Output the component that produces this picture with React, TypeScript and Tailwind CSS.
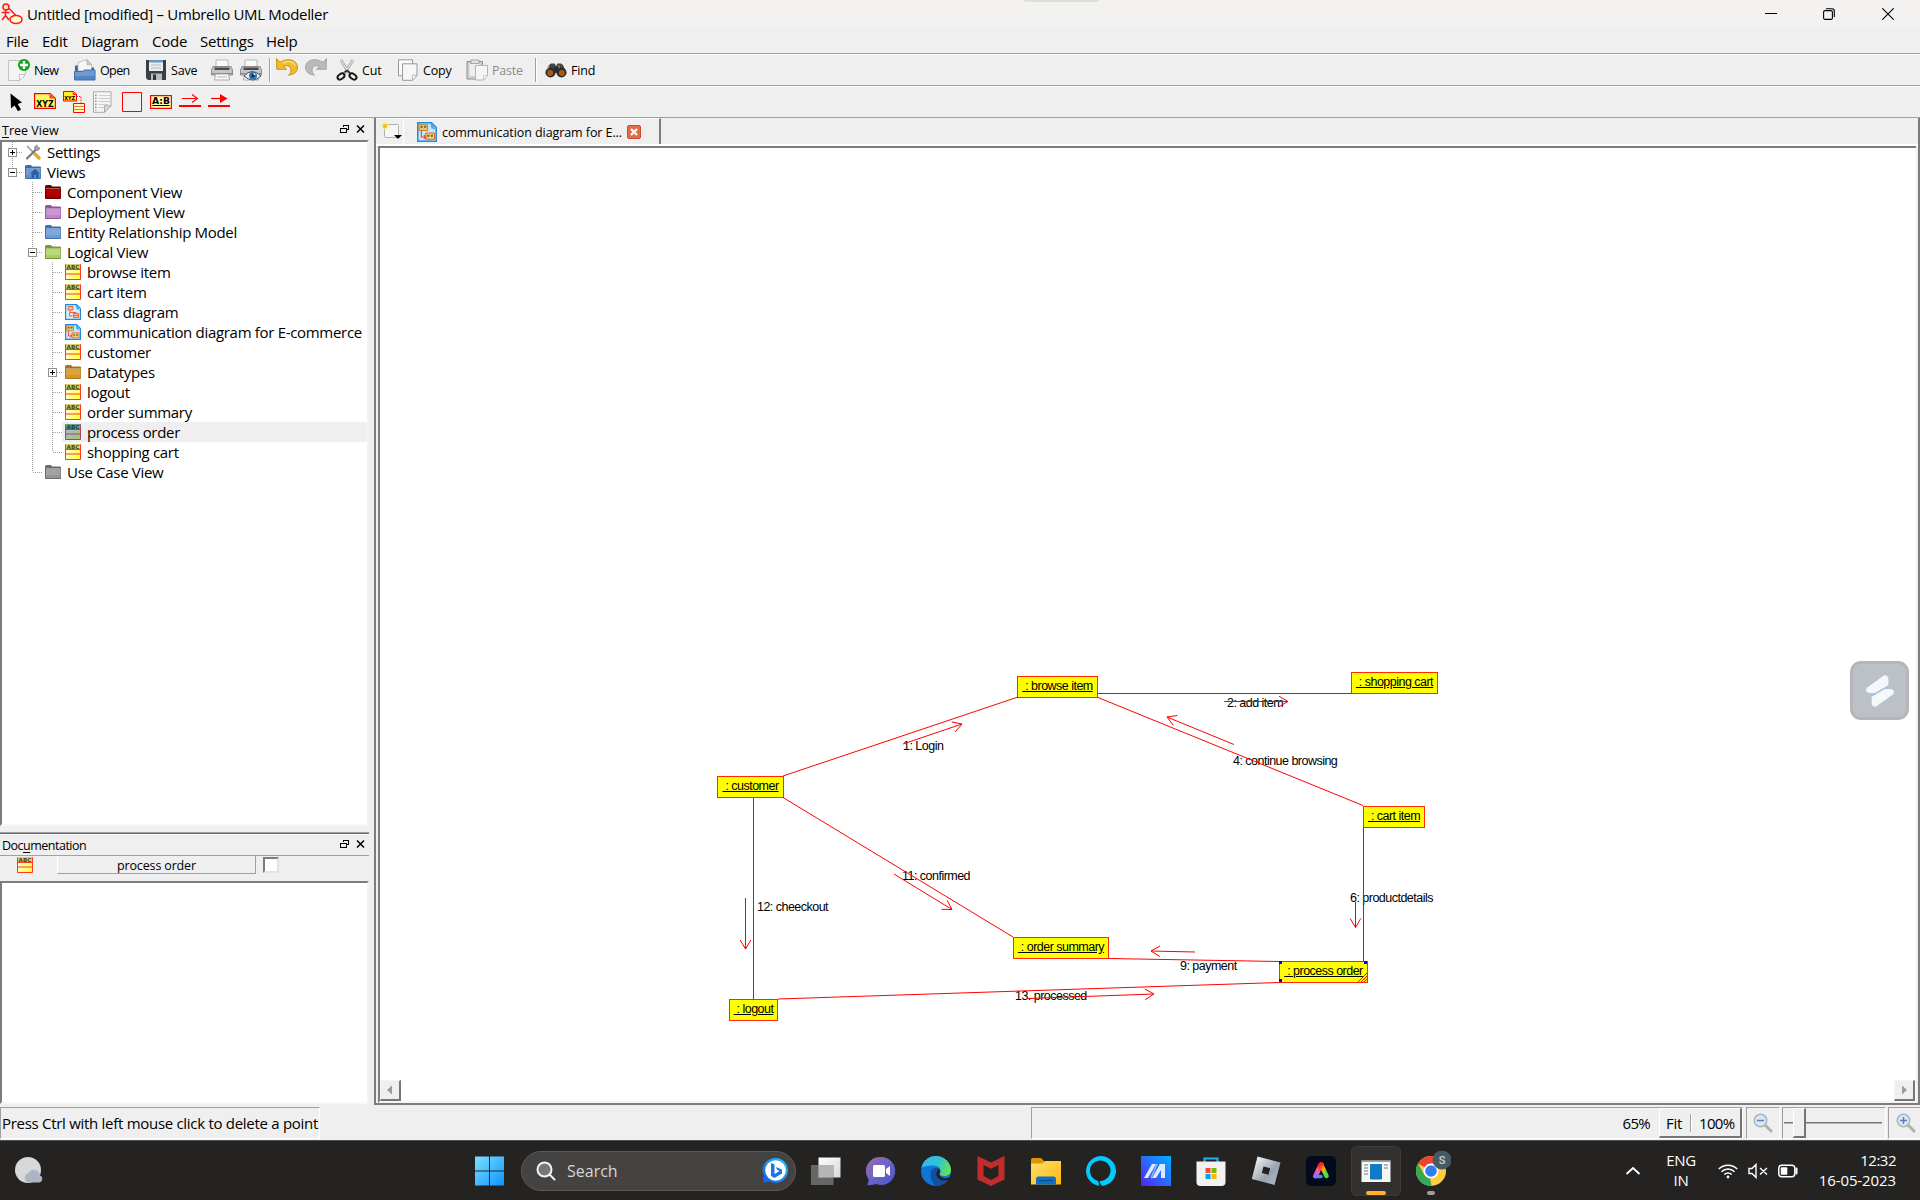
import React from 'react';

const UI = 'font-["Open_Sans",sans-serif] text-[15px] leading-[20px]';
const SMALL = 'font-["Open_Sans",sans-serif] text-[12.5px] leading-[16px]';

/* ---------- toolbar icons ---------- */

const I22 = ({ children, className = '' }: { children: React.ReactNode; className?: string }) => (
  <svg viewBox="0 0 22 22" className={'h-[22px] w-[22px] shrink-0 ' + className} fill="none">{children}</svg>
);

const NewIcon = () => (
  <I22>
    <path d="M.5 1.5h17v14l-6 6H.5z" fill="#f4f5f3" stroke="#c2c2c2" />
    <path d="M11.5 21.5v-6h6z" fill="#fff" stroke="#b5b5b5" strokeWidth=".8" />
    <circle cx="16" cy="6" r="6" fill="#11a51c" />
    <path d="M16 2v8M12 6h8" stroke="#fff" strokeWidth="2.4" />
  </I22>
);
const OpenIcon = () => (
  <I22>
    <path d="M1 6.500h5l1 2h13v8H1z" fill="#3f6795" />
    <path d="M4 12V3.500l9-3 4.500 5V12z" fill="#f7f7f7" stroke="#aaa" strokeWidth=".7" />
    <path d="M12.500.7l.8 5.300 4.200-.5z" fill="#d0d0d0" stroke="#999" strokeWidth=".5" />
    <path d="M.5 12.500h8l2-1.500h10.500v10H.5z" fill="#6d9bd0" stroke="#3f70a8" />
    <path d="M1 17h20v4H1z" fill="#3f72ae" opacity=".55" />
  </I22>
);
const SaveIcon = () => (
  <I22>
    <path d="M1 1h20v20H3l-2-2z" fill="#3c3f42" />
    <path d="M4 1h14v11H4z" fill="#e9edf1" />
    <path d="M4 1h14v2.500H4z" fill="#6b98c8" />
    <path d="M6 6h10M6 9h10" stroke="#b8bcc0" />
    <path d="M6 14.500h11V21H6z" fill="#b9bcbe" />
    <path d="M8 15.500h3V21H8z" fill="#303234" />
  </I22>
);
const PrintBody = () => (
  <>
    <path d="M5 1h12v8H5z" fill="#fafafa" stroke="#aaa" strokeWidth=".8" />
    <path d="M2 7.500h18l1.500 3.500v5H.5v-5z" fill="#c6c6c6" stroke="#777" strokeWidth=".8" />
    <path d="M3.500 8.500h15V11h-15z" fill="#4a4a4a" />
    <path d="M1 14.500h20" stroke="#8a8a8a" />
    <path d="M4.500 15h13l1 6h-15z" fill="#f8f8f8" stroke="#999" strokeWidth=".8" />
  </>
);
const PrintIcon = () => <I22><PrintBody /><path d="M6 18h10" stroke="#bbb" /></I22>;
const PreviewIcon = () => (
  <I22>
    <PrintBody />
    <path d="M4 17q8-9 17 0-8 8-17 0z" fill="#e9eef3" stroke="#47525c" />
    <circle cx="13" cy="16.800" r="4" fill="#2f78b5" />
    <circle cx="13" cy="16.800" r="1.700" fill="#142f49" />
    <circle cx="14.500" cy="15.200" r=".9" fill="#fff" />
  </I22>
);
const Curl = ({ fill, stroke }: { fill: string; stroke: string }) => (
  <path d="M.5.5l.3 10.800h9.700L7.500 8q7.500-1.600 7.500 4.500 0 2.700-2.500 4.800 9.500-1.500 9-8.500C20.800 1.500 11.500-.5 4 4.200z" fill={fill} stroke={stroke} strokeWidth=".9" />
);
const UndoIcon = () => <I22 className="-mt-[2px]"><Curl fill="#eebd2c" stroke="#c48d0b" /><path d="M7 5q9-3.500 12 2.500" stroke="#fbe28c" strokeWidth="1.300" /></I22>;
const RedoIcon = () => <I22 className="-mt-[2px]"><g transform="translate(22 0) scale(-1 1)"><Curl fill="#b9b9b9" stroke="#a2a2a2" /></g></I22>;
const CutIcon = () => (
  <I22>
    <path d="M5 1l8.500 14" stroke="#999" strokeWidth="2.600" /><path d="M17 1L8 15" stroke="#999" strokeWidth="2.600" />
    <path d="M5 1l8.500 14M17 1L8 15" stroke="#f2f2f2" strokeWidth="1.100" />
    <path d="M8.500 13.500l2.500-2 3 2.500" stroke="#222" strokeWidth="1.600" />
    <ellipse cx="5" cy="17.500" rx="3.800" ry="2.500" transform="rotate(-35 5 17.500)" stroke="#161616" strokeWidth="2" />
    <ellipse cx="17" cy="17.500" rx="3.800" ry="2.500" transform="rotate(35 17 17.500)" stroke="#161616" strokeWidth="2" />
  </I22>
);
const CopyIcon = () => (
  <I22>
    <path d="M1.500.8h14v16h-14z" fill="#fafafa" stroke="#999" />
    <path d="M5.500 4.800h14.500v11.500l-4.500 5h-10z" fill="#f6f6f6" stroke="#999" />
    <path d="M15.500 21.300v-5H20z" fill="#fff" stroke="#aaa" strokeWidth=".8" />
  </I22>
);
const PasteIcon = () => (
  <I22>
    <path d="M1 2.500h15.500v17.500H1z" fill="#cfcfcf" stroke="#8d8d8d" />
    <path d="M3.500 5h10v12h-10z" fill="#eee" />
    <path d="M5 1h8v3.500H5z" fill="#e3e3e3" stroke="#999" strokeWidth=".8" />
    <path d="M9.500 6.500h12v10l-4 4.500h-8z" fill="#f6f6f6" stroke="#b3b3b3" />
    <path d="M17.500 21v-4.500h4z" fill="#fff" stroke="#bbb" strokeWidth=".8" />
  </I22>
);
const FindIcon = () => (
  <I22>
    <path d="M4 6l2-1.500h3.500L11 7l1.500-2.500H16L18 6l3.500 8H.5z" fill="#434343" />
    <path d="M9 8h4v5H9z" fill="#2b2b2b" />
    <circle cx="5.500" cy="13.500" r="5" fill="#2c2c2c" /><circle cx="16.500" cy="13.500" r="5" fill="#2c2c2c" />
    <circle cx="5.200" cy="14" r="3" fill="#a85a1b" /><circle cx="16.800" cy="14" r="3" fill="#a85a1b" />
    <path d="M4.500 6.500l-2 4M13.500 6l1 3" stroke="#8a8a8a" strokeWidth="1.200" />
  </I22>
);

/* ---------- UML tool icons ---------- */

const Bold = ({ x, y, size, len, children }: { x: number; y: number; size: number; len: number; children: string }) => (
  <text x={x} y={y} fontSize={size} textLength={len} lengthAdjust="spacingAndGlyphs" fontWeight="700" fontFamily="DejaVu Sans, sans-serif" fill="#000">{children}</text>
);
const tools: React.ReactNode[] = [
  <path d="M5.500 2.500l.5 15 3.500-3 3.500 5.800 3-1.800-3.300-5.500 4.300-1.500z" fill="#000" />,
  <><path d="M.6 2.600h15.600l5.200 4.800v10H.6z" fill="#fffa66" stroke="red" strokeWidth="1.200" /><path d="M14.500 3l1.500 4.500h5z" fill="#ff3b1f" /><Bold x={2.200} y={15.800} size={8.500} len={17.500}>XYZ</Bold></>,
  <><path d="M.5.5h10l3 2.500v7H.5z" fill="#ffee22" stroke="red" /><path d="M9 1l1.500 3h3z" fill="red" /><Bold x={1.200} y={8.500} size={5.500} len={11}>XYZ</Bold><path d="M13.500 5.500h4.500V12" stroke="red" strokeDasharray="1.300 1.300" /><path d="M10.500 12.500h11v9h-11z" fill="#ffffa8" stroke="red" /><path d="M10.500 15.500h11M10.500 18.500h11" stroke="#ff6a4a" /></>,
  <><path d="M1.500.8h17.500v14l-6.500 6.500h-11z" fill="#f5f5f5" stroke="#aaa" /><path d="M6.500 4.500H18M6.500 7.500H18M6.500 10.500H18M6.500 13.500H16M6.500 16.500H12" stroke="#c9ced6" /><path d="M3.800 3.500v16" stroke="#999" strokeWidth="1.600" strokeDasharray="1.500 1.500" /><path d="M12.500 21.300v-6.500H19z" fill="#ddd" stroke="#aaa" /></>,
  <path d="M1.500 1.500h19v19h-19z" stroke="red" />,
  <><path d="M.6 4.600h20.800v12.800H.6z" fill="#ffffb0" stroke="red" strokeWidth="1.200" /><path d="M2.500 14.500h17" stroke="#000" /><Bold x={2} y={13} size={8.500} len={18}>A:B</Bold></>,
  <><path d="M0 15h22" stroke="red" strokeWidth="2" /><path d="M3 7.500h15M13 3.500l5.500 4-5.500 4" stroke="red" strokeWidth="1.100" /></>,
  <><path d="M0 15h22" stroke="red" strokeWidth="2" /><path d="M3 7.500h11" stroke="red" strokeWidth="1.200" /><path d="M12 3l7.500 4.500L12 12z" fill="red" /></>,
];

/* ---------- tree ---------- */

const I16 = ({ children }: { children: React.ReactNode }) => (
  <svg viewBox="0 0 16 16" className="ml-[3px] h-4 w-4 shrink-0" fill="none">{children}</svg>
);
const Folder = ({ main, dark, home = false }: { main: string; dark: string; home?: boolean }) => (
  <I16>
    <path d="M.5 14.500V2.200Q.5 1.500 1.300 1.500H6l1 1.500h8.500v11.500z" fill={dark} stroke={dark} />
    <path d="M1 5h14.500v6H1z" fill={main} /><path d="M1 11h14.500v3H1z" fill={main} opacity=".75" />
    <path d="M1 4.500h14.500" stroke="#fff" strokeOpacity=".35" />
    {home && <path d="M5 9.500L10 5l5 4.500h-1.500V14h-2.500v-3H9v3H6.500V9.500z" fill="#2b60a2" />}
  </I16>
);
const ClassIcon = ({ selected = false }: { selected?: boolean }) => (
  <I16>
    <defs>
      <linearGradient id="cls" x1="0" y1="0" x2="1" y2=".5"><stop offset=".1" stopColor="#fffde6" /><stop offset="1" stopColor="#ffff4a" /></linearGradient>
      <linearGradient id="clsSel" x1="0" y1="0" x2="1" y2=".5"><stop stopColor="#a8bcd2" /><stop offset="1" stopColor="#a5c383" /></linearGradient>
    </defs>
    <path d="M.5.5h15v15H.5z" fill={selected ? 'url(#clsSel)' : 'url(#cls)'} stroke={selected ? '#a04a5c' : '#ff3a1c'} />
    <path d="M1 0h14v5H1z" fill={selected ? '#6d9a8c' : '#d9cf6a'} />
    <text x="1.500" y="4.600" fontSize="5.500" fontWeight="700" textLength="13" lengthAdjust="spacingAndGlyphs" fontFamily="DejaVu Sans, sans-serif" fill={selected ? '#243c4c' : '#4c4a20'}>ABC</text>
    <path d="M0 5.500h16M0 10h16" stroke={selected ? '#a04a5c' : '#ff3a1c'} strokeWidth="1.100" />
  </I16>
);
const DiagramShape = ({ alt = false }: { alt?: boolean }) => (
  <>
    <path d="M.6.6h11l3.800 3.800v11H.6z" fill={alt ? '#c4e6fb' : '#d6efff'} stroke="#1b8be6" strokeWidth="1.200" />
    <path d="M10.500 1q3 .5 4 5l-3-1z" fill="#4aa9f2" />
    {alt ? (
      <>
        <path d="M1.500 1.800h7v5h-7z" fill="#dfc47a" stroke="#c9822f" strokeWidth=".8" />
        <path d="M7 8.800h7v5H7z" fill="#efcf83" stroke="#e8622a" strokeWidth=".8" />
        <path d="M2.800 3.800h1.700M5.700 3.800h1.700M8.200 11h1.700M11 11h1.700" stroke="#5d6a2c" strokeWidth="1.500" />
        <path d="M3.500 7v5H7M5.500 10.500L7 12l-1.500 1.500" stroke="#ff4033" strokeWidth=".9" />
      </>
    ) : (
      <>
        <path d="M3 2.500h5v3.500H3zM8.500 9.500h5v4h-5z" fill="#ffc08a" stroke="#e8622a" strokeWidth=".9" />
        <path d="M8.500 11.500h5" stroke="#e8622a" strokeWidth=".8" />
        <path d="M5 6v2.500h6v1M4.500 8.500v3.500h3" stroke="#ef4b2d" strokeWidth=".9" />
      </>
    )}
  </>
);
const SettingsIcon = () => (
  <I16>
    <path d="M2 2l9 9" stroke="#9a9a9a" strokeWidth="1.600" /><path d="M10 10l4 4" stroke="#e3a812" strokeWidth="3.200" strokeLinecap="round" />
    <path d="M2 14.500L11 5.500" stroke="#777" strokeWidth="2.200" strokeLinecap="round" />
    <path d="M10 5.500L9.500 3 12 1l.5 2.500L15 4l-2 2.500z" fill="#aaa" stroke="#777" strokeWidth=".8" />
  </I16>
);

type Cell = 'none' | 'v' | 't' | 'l';
const Branch = ({ kind, box }: { kind: Cell; box?: '+' | '-' }) => (
  <svg viewBox="0 0 20 20" className="h-5 w-5 shrink-0" fill="none" stroke="#a0a0a0" strokeDasharray="1 1" shapeRendering="crispEdges">
    {(kind === 'v' || kind === 't') && <path d="M10.500 0v20" />}
    {kind === 'l' && <path d="M10.500 0v10" />}
    {(kind === 't' || kind === 'l') && <path d="M11 10.500h9" />}
    {box && (
      <g strokeDasharray="none">
        <path d="M6.500 6.500h8v8h-8z" fill="#fff" stroke="#909090" />
        <path d={box === '+' ? 'M8 10.500h5M10.500 8v5' : 'M8 10.500h5'} stroke="#000" />
      </g>
    )}
  </svg>
);

type Row = { label: string; cells: Cell[]; box?: '+' | '-'; icon: React.ReactNode; selected?: boolean };
const rows: Row[] = [
  { label: 'Settings', cells: ['t'], box: '+', icon: <SettingsIcon /> },
  { label: 'Views', cells: ['l'], box: '-', icon: <Folder main="#6f9bd6" dark="#3c6eae" home /> },
  { label: 'Component View', cells: ['none', 't'], icon: <Folder main="#b30000" dark="#6d0000" /> },
  { label: 'Deployment View', cells: ['none', 't'], icon: <Folder main="#cf94d8" dark="#93559f" /> },
  { label: 'Entity Relationship Model', cells: ['none', 't'], icon: <Folder main="#7fa9dd" dark="#416fa9" /> },
  { label: 'Logical View', cells: ['none', 't'], box: '-', icon: <Folder main="#b9db74" dark="#759a35" /> },
  { label: 'browse item', cells: ['none', 'v', 't'], icon: <ClassIcon /> },
  { label: 'cart item', cells: ['none', 'v', 't'], icon: <ClassIcon /> },
  { label: 'class diagram', cells: ['none', 'v', 't'], icon: <I16><DiagramShape /></I16> },
  { label: 'communication diagram for E-commerce', cells: ['none', 'v', 't'], icon: <I16><DiagramShape alt /></I16> },
  { label: 'customer', cells: ['none', 'v', 't'], icon: <ClassIcon /> },
  { label: 'Datatypes', cells: ['none', 'v', 't'], box: '+', icon: <Folder main="#dfa436" dark="#a8731a" /> },
  { label: 'logout', cells: ['none', 'v', 't'], icon: <ClassIcon /> },
  { label: 'order summary', cells: ['none', 'v', 't'], icon: <ClassIcon /> },
  { label: 'process order', cells: ['none', 'v', 't'], icon: <ClassIcon selected />, selected: true },
  { label: 'shopping cart', cells: ['none', 'v', 'l'], icon: <ClassIcon /> },
  { label: 'Use Case View', cells: ['none', 'l'], icon: <Folder main="#a3a3a3" dark="#6b6b6b" /> },
];

const Tree = () => (
  <div className="h-full bg-white">
    {rows.map((r) => (
      <div key={r.label} className="flex h-5 items-center">
        {r.cells.map((c, i) => <Branch key={i} kind={c} box={i === r.cells.length - 1 ? r.box : undefined} />)}
        <div className={'flex h-5 flex-1 items-center ' + (r.selected ? 'bg-[#efefef]' : '')}>
          {r.icon}
          <span className={UI + ' ml-[6px] tracking-[-0.31px] whitespace-nowrap'}>{r.label}</span>
        </div>
      </div>
    ))}
  </div>
);

const DockTitle = ({ children, className }: { children: React.ReactNode; className: string }) => (
  <div className={'flex shrink-0 items-center pl-[2px] ' + className}>
    <span className={SMALL + ' flex-1'}>{children}</span>
    <svg viewBox="0 0 28 11" className="mr-[1px] mb-[3px] h-[11px] w-[28px]" fill="none" stroke="#000" shapeRendering="crispEdges">
      <path d="M3.500 3V1.500h5v4H7M3 1h6" /><path d="M.5 4.500h6v4h-6zM0 4h7" />
      <path d="M17 1.500l7 7M24 1.500l-7 7" strokeWidth="1.500" shapeRendering="auto" />
    </svg>
  </div>
);

/* ---------- diagram ---------- */

const nodes = [
  { label: 'browse item', pos: 'left-[637px] top-[528px] w-[81px]' },
  { label: 'shopping cart', pos: 'left-[971px] top-[524px] w-[87px]' },
  { label: 'customer', pos: 'left-[337px] top-[628px] w-[67px]' },
  { label: 'cart item', pos: 'left-[983px] top-[658px] w-[62px]' },
  { label: 'order summary', pos: 'left-[633px] top-[789px] w-[96px]' },
  { label: 'process order', pos: 'left-[899px] top-[813px] w-[89px]' },
  { label: 'logout', pos: 'left-[349px] top-[851px] w-[49px]' },
];
const messages = [
  { label: '1: Login', pos: 'left-[523px] top-[591px]' },
  { label: '2: add item', pos: 'left-[847px] top-[548px]' },
  { label: '4: continue browsing', pos: 'left-[853px] top-[606px]' },
  { label: '6: productdetails', pos: 'left-[970px] top-[743px]' },
  { label: '9: payment', pos: 'left-[800px] top-[811px]' },
  { label: '11: confirmed', pos: 'left-[522px] top-[721px]' },
  { label: '12: cheeckout', pos: 'left-[377px] top-[752px]' },
  { label: '13. processed', pos: 'left-[635px] top-[841px]' },
];
const arrows: [number, number, number, number][] = [
  [903, 744, 962, 724], [894, 874, 952, 909.5], [745.5, 898, 745.5, 949], [1028, 998.5, 1154, 994],
  [1224, 701.5, 1288, 701.5], [1234, 744.5, 1167, 717], [1355.5, 902, 1355.5, 927.5], [1195, 952, 1151, 951],
];
const arrowPath = ([x1, y1, x2, y2]: [number, number, number, number]) => {
  const d = Math.hypot(x2 - x1, y2 - y1);
  const ux = (x2 - x1) / d, uy = (y2 - y1) / d;
  const bx = x2 - ux * 9, by = y2 - uy * 9;
  return `M${x1} ${y1}L${x2} ${y2}M${bx - uy * 5.3} ${by + ux * 5.3}L${x2} ${y2}L${bx + uy * 5.3} ${by - ux * 5.3}`;
};

const Diagram = () => (
  <div className="relative h-full w-full overflow-hidden bg-white font-['Liberation_Sans',sans-serif] text-[12.5px] leading-[15px] tracking-[-0.52px] text-black">
    {nodes.map((n) => (
      <div key={n.label} className={'absolute flex h-[22px] items-center justify-center whitespace-pre border border-[#ff2a00] bg-[#ffff00] pb-[1px] ' + n.pos}>
        <span className="underline underline-offset-1">{' : ' + n.label}</span>
      </div>
    ))}
    {messages.map((m) => <div key={m.label} className={'absolute whitespace-nowrap ' + m.pos}>{m.label}</div>)}
    <svg viewBox="380 148 1536 953" className="absolute top-0 left-0 h-[953px] w-[1536px]" fill="none" stroke="#ff0000" strokeWidth="1">
      <path d="M783 776L1018 697M1098 693.500H1351M1098 697.500L1363 805.500M783 797.500L1013 937M753.500 798V999M1363.500 828V961M1109 958.500L1279 961.500M778 999L1279 982.500" />
      {arrows.map((a, i) => <path key={i} d={arrowPath(a)} />)}
      <path d="M1358 982l9-9M1361 982l6-6M1364 982l3-3" />
      <path d="M1279 961h3v3h-3zM1364 961h3v3h-3zM1279 979h3v3h-3z" fill="#0000ff" stroke="none" />
    </svg>
    {[0, 1].map((s) => (
      <div key={s} className={'absolute bottom-0 flex h-[21px] w-[21px] items-center justify-center border-t border-r-2 border-b-2 border-l border-t-[#f4f4f4] border-r-[#757575] border-b-[#757575] border-l-[#f4f4f4] bg-[#efefef] ' + (s ? 'right-[1px]' : 'left-0')}>
        <svg viewBox="0 0 10 10" className="h-[10px] w-[10px]"><path d={s ? 'M3 .5v9L8 5z' : 'M7 .5v9L2 5z'} fill="#9a9a9a" /></svg>
      </div>
    ))}
  </div>
);

/* ---------- taskbar ---------- */

const T30 = ({ children }: { children: React.ReactNode }) => (
  <svg viewBox="0 0 30 30" className="h-[30px] w-[30px]" fill="none">{children}</svg>
);
const appIcons: React.ReactNode[] = [
  <T30><defs><linearGradient id="tv" x1="0" y1="0" x2="1" y2="1"><stop stopColor="#fff" /><stop offset="1" stopColor="#d8d8d8" /></linearGradient></defs><path d="M7.500 1.500h22v20h-22z" fill="url(#tv)" /><path d="M0 9h22.500v20H0z" fill="#777" opacity=".8" /><path d="M7.500 9h15v12.500h-15z" fill="#b5b5b5" /></T30>,
  <T30><defs><linearGradient id="chat" x1="0" y1="0" x2="1" y2="1"><stop stopColor="#a06a9f" /><stop offset=".5" stopColor="#6a63cc" /><stop offset="1" stopColor="#4d55c4" /></linearGradient></defs><path d="M15 1a14 14 0 1 1-5 27q-4 1.500-9 1 2-3 1.500-6A14 14 0 0 1 15 1z" fill="url(#chat)" /><rect x="7" y="9" width="12" height="12" rx="1.500" fill="#fff" /><path d="M20 13l4-3v10l-4-3z" fill="#fff" /></T30>,
  <T30>
    <defs><linearGradient id="eg" x1="0" y1=".3" x2="1" y2=".6"><stop stopColor="#35b8f0" /><stop offset=".55" stopColor="#2fc4cf" /><stop offset="1" stopColor="#6be34c" /></linearGradient></defs>
    <circle cx="15" cy="15" r="15" fill="#0f75d6" />
    <path d="M.3 12A15 15 0 0 1 30 14c0 4-3.500 6-7 6-4 0-5-1.500-4-3 2-3-1-7.500-6.500-7.500C7 9.500 2 10.500.3 12z" fill="url(#eg)" />
    <path d="M9.500 18c0-5 4-6.500 7-6 2 1 3 3.500 2 5-1.500 2.500.5 5.500 5 5.500 2 0 4-.5 5-1.500C26 27 20 30 16 30c-4-1-6.500-7-6.500-12z" fill="#10509e" />
    <path d="M17.500 12.500c2 1.500 2 3 1.300 4.500-1 2 1 4.500 4.500 5 2.500.3 4.500-.3 6-1.300l-1.500 3.300-5 .5c-6-.5-8-5-7.500-8z" fill="#242322" />
  </T30>,
  <T30><path d="M1.500 0L15 6.500 28.500 0v23.500L15 30 1.500 23.500zM7.500 9v11L15 24l7.500-4V9L15 12.800z" fill="#c22d2b" fillRule="evenodd" /></T30>,
  <T30><defs><linearGradient id="fe" x1="0" y1="0" x2="1" y2="1"><stop stopColor="#ffdf70" /><stop offset="1" stopColor="#fdb90c" /></linearGradient></defs><path d="M0 3.500Q0 2 1.500 2H10l3 3v5H0z" fill="#dc9600" /><path d="M0 7.500h11L14 5h16v23.500H0z" fill="url(#fe)" /><path d="M5 28.500V23q0-2.500 2.500-2.500h15q2.500 0 2.500 2.500v5.500z" fill="#0f6fc5" /><path d="M8 24.500h14" stroke="#0a4b8c" strokeWidth="1.200" /></T30>,
  <T30><path d="M13 29.900A15 15 0 1 1 17 29.900c-1.500-.2-2.500-1.200-3.500-4.900A10.300 10.300 0 1 0 11 24.500c1.500.6 2 2 2 5.400z" fill="#00caff" /></T30>,
  <T30><defs><linearGradient id="ma" x1="0" y1="1" x2="1" y2="0"><stop stopColor="#5322f5" /><stop offset=".5" stopColor="#2a6bff" /><stop offset="1" stopColor="#00b0ff" /></linearGradient></defs><path d="M0 0h30v30H0z" fill="url(#ma)" /><path d="M3 22L11 8h4L7 22zM11 22L19 8h5v14h-4v-8l-5 8z" fill="#dce9ff" /><path d="M16 8l-6 14" stroke="#8fb7ff" strokeWidth="1.500" /></T30>,
  <T30><path d="M8.500 7V2.500h13V7" stroke="#1fb3e8" strokeWidth="2.200" /><path d="M.5 5.500h29V26q0 4-4 4h-21q-4 0-4-4z" fill="#f2f2f2" /><path d="M9.500 12h5v5h-5z" fill="#f25022" /><path d="M15.500 12h5v5h-5z" fill="#7fba00" /><path d="M9.500 18h5v5h-5z" fill="#00a4ef" /><path d="M15.500 18h5v5h-5z" fill="#ffb900" /></T30>,
  <T30><defs><linearGradient id="rb" x1="0" y1="0" x2="1" y2="1"><stop stopColor="#fff" /><stop offset=".6" stopColor="#9aa4b0" /><stop offset="1" stopColor="#b5bdc6" /></linearGradient></defs><path d="M6.500.5L29.500 6.500 23.500 29 .8 23zM12.500 10.500l-1.700 6.500 6.700 1.800 1.700-6.600z" fill="url(#rb)" fillRule="evenodd" /></T30>,
  <T30><defs><linearGradient id="ae1" x1="0" y1="1" x2=".6" y2="0"><stop stopColor="#ae5cff" /><stop offset=".5" stopColor="#ff5aa0" /><stop offset="1" stopColor="#ff2a20" /></linearGradient><linearGradient id="ae2" x1="0" y1="0" x2=".5" y2="1"><stop stopColor="#ff1f1f" /><stop offset=".5" stopColor="#ffb300" /><stop offset="1" stopColor="#50dc50" /></linearGradient></defs><rect width="30" height="30" rx="5" fill="#020a1c" /><path d="M9.500 20L15 8.500" stroke="url(#ae1)" strokeWidth="5" strokeLinecap="round" /><path d="M15 8.500L20.500 20" stroke="url(#ae2)" strokeWidth="4.500" strokeLinecap="round" /><path d="M11 20.500h4" stroke="#4a8cff" strokeWidth="3.500" strokeLinecap="round" /></T30>,
  <T30><path d="M.5 4.500h29v21.500H.5z" fill="#f7f7f7" /><path d="M.5 4h29v1.800H.5z" fill="#8a8a8a" /><rect x="9" y="8" width="12" height="15.500" rx="1" fill="#117bc9" /><path d="M3 9h4M3 12h4M3 15h4M3 18h4M23 9h4M23 12h4" stroke="#777" strokeWidth="1.200" /></T30>,
  <svg viewBox="0 0 40 40" className="h-[40px] w-[40px]" fill="none">
    <circle cx="20" cy="20" r="15" fill="#ffcd40" />
    <path d="M20 20L7 12.500A15 15 0 0 1 33 12.500H20z" fill="#ea4335" />
    <path d="M7 12.500L13.500 24 19 27l1.500 8A15 15 0 0 1 7 12.500z" fill="#34a853" />
    <circle cx="20" cy="20" r="7.500" fill="#fff" /><circle cx="20" cy="20" r="5.800" fill="#2f7df0" />
    <circle cx="31" cy="9" r="9.500" fill="#455a64" />
    <text x="31" y="13" textAnchor="middle" fontSize="11" fontFamily="Roboto, sans-serif" fontWeight="500" fill="#c9d3d8">S</text>
  </svg>,
];

const Taskbar = () => (
  <div className="flex h-[60px] shrink-0 items-center border-t border-[#4c5250] bg-[#242322] font-['Open_Sans',sans-serif] text-white">
    <svg viewBox="0 0 30 30" className="ml-[14px] h-[30px] w-[30px]" fill="none">
      <circle cx="14" cy="14" r="13" fill="#d7d8d8" />
      <path d="M14 26.500a5 5 0 0 1 .5-9.500 6 6 0 0 1 11.300 2.200 3.800 3.800 0 0 1-.8 7.300z" fill="#aab6c4" />
    </svg>
    <svg viewBox="0 0 30 30" className="ml-[431px] h-[30px] w-[30px]" fill="none">
      <defs><linearGradient id="win" x1="0" y1="0" x2="1" y2="1"><stop stopColor="#7fe0ff" /><stop offset="1" stopColor="#0895ff" /></linearGradient></defs>
      <path d="M0 .5h14v14H0zM15 .5h14v14H15zM0 15.500h14v14H0zM15 15.500h14v14H15z" fill="url(#win)" />
    </svg>
    <div className="ml-[16px] flex h-[40px] w-[275px] items-center rounded-full border border-[#5c5a59] bg-[#454342] pr-[7px] pl-[14px]">
      <svg viewBox="0 0 20 20" className="h-[20px] w-[20px]" fill="none" stroke="#f2f2f2" strokeWidth="2"><circle cx="8.500" cy="8.500" r="7" fill="#777" /><path d="M13.500 13.500l5 5" strokeLinecap="round" /></svg>
      <span className="ml-[11px] flex-1 text-[16px] text-[#d6d6d6]">Search</span>
      <svg viewBox="0 0 26 26" className="h-[26px] w-[26px]" fill="none">
        <defs><linearGradient id="bg" x1="0" y1="1" x2="1" y2="0"><stop stopColor="#1458e0" /><stop offset="1" stopColor="#25c8f5" /></linearGradient></defs>
        <path d="M13.500 0a12.500 12.500 0 1 1-6 23.500L1 25l.8-7A12.500 12.500 0 0 1 13.500 0z" fill="url(#bg)" />
        <circle cx="13.500" cy="12.500" r="10.300" fill="#fff" />
        <path d="M9 5l3.500 1.500v9.500l5-3-2.500-1.200L14 9l6 2.500v4l-7.500 4.500L9 18z" fill="#1c74e8" />
      </svg>
    </div>
    <div className="ml-[2px] flex items-center">
      {appIcons.map((icon, i) => (
        <div key={i} className="flex h-[60px] w-[55px] items-center justify-center">
          {i === 10 ? (
            <div className="relative flex h-[50px] w-[50px] items-center justify-center rounded-[5px] border border-[#3d3c3b] bg-[#323130]">
              {icon}
              <div className="absolute bottom-0 left-[14px] h-[4px] w-[20px] rounded-full bg-[#ffb02e]" />
            </div>
          ) : i === 11 ? (
            <div className="relative">{icon}<div className="absolute -bottom-[4px] left-[16px] h-[4px] w-[8px] rounded-full bg-[#9d9d9d]" /></div>
          ) : icon}
        </div>
      ))}
    </div>
    <div className="mr-[24px] ml-auto flex items-center text-[15px] leading-[20px]">
      <svg viewBox="0 0 16 10" className="h-[10px] w-[16px]" fill="none" stroke="#fff" strokeWidth="1.800"><path d="M1.500 8L8 2l6.500 6" /></svg>
      <div className="-mt-[1px] ml-[25px] w-[30px] text-center tracking-[-0.3px]">ENG<br />IN</div>
      <svg viewBox="0 0 20 16" className="ml-[22px] h-[16px] w-[20px]" fill="none" stroke="#fff" strokeWidth="1.500"><path d="M.8 6a13 13 0 0 1 18.400 0M3.500 8.800a9 9 0 0 1 13 0M6.300 11.500a5.200 5.200 0 0 1 7.400 0" /><circle cx="10" cy="14" r="1.400" fill="#fff" stroke="none" /></svg>
      <svg viewBox="0 0 20 16" className="ml-[10px] h-[16px] w-[20px]" fill="none" stroke="#fff" strokeWidth="1.400"><path d="M1 5.500h3l4-4v13l-4-4H1zM12 5l7 6.500M19 5l-7 6.500" /></svg>
      <svg viewBox="0 0 20 16" className="ml-[10px] h-[16px] w-[20px]" fill="none"><rect x=".8" y="2.300" width="16" height="11.400" rx="3" stroke="#fff" strokeWidth="1.500" /><rect x="2.800" y="4.300" width="6.500" height="7.400" rx="1" fill="#fff" /><path d="M18.500 5.500v5" stroke="#fff" strokeWidth="2" strokeLinecap="round" /></svg>
      <div className="-mt-[2px] ml-[20px] w-[78px] text-right whitespace-nowrap"><span className="tracking-[-0.5px]">12:32</span><br /><span className="tracking-[-0.1px]">16-05-2023</span></div>
    </div>
  </div>
);

/* ---------- chrome ---------- */

const Groove = () => <div className="h-[2px] shrink-0 border-t border-b border-t-[#9f9f9f] border-b-white" />;
const VSep = () => <div className="h-[24px] w-[2px] border-r border-l border-r-white border-l-[#a0a0a0]" />;
const Tool = ({ icon, label, className, labelClass = 'tracking-[-0.2px]' }: { icon: React.ReactNode; label?: string; className: string; labelClass?: string }) => (
  <div className={'flex items-center ' + className}>
    {icon}
    {label && <span className={SMALL + ' ml-[4px] pt-[2px] whitespace-nowrap ' + labelClass}>{label}</span>}
  </div>
);

const Magnifier = ({ plus = false }: { plus?: boolean }) => (
  <svg viewBox="0 0 20 20" className="h-[20px] w-[20px]" fill="none">
    <path d="M12 12l6 6" stroke="#b0b0b0" strokeWidth="3" strokeLinecap="round" />
    <circle cx="7.500" cy="7.500" r="6.200" fill="#dbe7f5" stroke="#a9b4bf" strokeWidth="1.500" />
    <path d={plus ? 'M4 7.500h7M7.500 4v7' : 'M4 7.500h7'} stroke="#5482ba" strokeWidth="1.500" />
  </svg>
);

export default function App() {
  return (
    <div className="relative flex h-[1200px] w-[1920px] flex-col overflow-hidden bg-[#efefef] text-black">
      {/* Title bar */}
      <div className="flex h-[28px] shrink-0 items-center bg-[#f3f2f1] pl-[1px]">
        <svg viewBox="0 0 22 22" className="h-[22px] w-[22px]" fill="none" stroke="#ff1a1a" strokeWidth="1.500">
          <circle cx="5" cy="4" r="3" fill="#ffe9c9" /><path d="M4.500 7v6M.5 9.500h8M4.500 12.500L1 17M4.500 12.500L8 17M8 5.500l7 7" />
          <ellipse cx="15" cy="16.500" rx="6" ry="4" fill="#ffffcc" />
        </svg>
        <span className={UI + ' ml-[4px] tracking-[-0.32px]'}>Untitled [modified] – Umbrello UML Modeller</span>
        <div className="ml-auto flex items-center">
          <svg viewBox="0 0 12 12" className="h-3 w-3" stroke="#000"><path d="M0 5.500h12" /></svg>
          <svg viewBox="0 0 12 12" className="ml-[46px] h-3 w-3" fill="none" stroke="#000" strokeWidth="1.100"><rect x=".6" y="2.600" width="8.800" height="8.800" rx="1.500" /><path d="M3 .7h6a2.300 2.300 0 0 1 2.300 2.300v6" /></svg>
          <svg viewBox="0 0 12 12" className="mr-[26px] ml-[47px] h-3 w-3" stroke="#000" strokeWidth="1.100"><path d="M.3.3l11.400 11.400M11.700.3L.3 11.700" /></svg>
        </div>
        <div className="absolute top-0 left-[1024px] h-[2px] w-[75px] rounded-b bg-[#dededd]" />
      </div>

      {/* Menu */}
      <div className={UI + ' flex h-[25px] shrink-0 items-center pt-[1px] pl-[6px] tracking-[-0.25px]'}>
        <span className="w-[36px]">File</span><span className="w-[39px]">Edit</span><span className="w-[71px]">Diagram</span>
        <span className="w-[48px]">Code</span><span className="w-[66px]">Settings</span><span>Help</span>
      </div>
      <Groove />

      {/* Main toolbar */}
      <div className="flex h-[30px] shrink-0 items-center pl-[8px]">
        <Tool className="w-[66px]" icon={<NewIcon />} label="New" labelClass="tracking-[-0.6px]" />
        <Tool className="w-[71px]" icon={<OpenIcon />} label="Open" labelClass="tracking-[-0.6px]" />
        <Tool className="w-[66px]" icon={<SaveIcon />} label="Save" />
        <Tool className="w-[29px]" icon={<PrintIcon />} />
        <Tool className="w-[29px]" icon={<PreviewIcon />} />
        <VSep />
        <Tool className="ml-[5px] w-[29px]" icon={<UndoIcon />} />
        <Tool className="w-[31px]" icon={<RedoIcon />} />
        <Tool className="w-[61px]" icon={<CutIcon />} label="Cut" />
        <Tool className="w-[69px]" icon={<CopyIcon />} label="Copy" />
        <Tool className="w-[69px]" icon={<PasteIcon />} label="Paste" labelClass="tracking-[-0.2px] text-[#8c8c8c]" />
        <VSep />
        <Tool className="ml-[8px]" icon={<FindIcon />} label="Find" />
      </div>
      <Groove />

      {/* UML tools */}
      <div className="flex h-[30px] shrink-0 items-center gap-[7px] pl-[5px]">
        {tools.map((t, i) => <I22 key={i}>{t}</I22>)}
      </div>

      <div className="flex h-[988px] shrink-0 border-t border-[#9f9f9f]">
        {/* Docks */}
        <div className="flex w-[369px] shrink-0 flex-col border-t border-white">
          <DockTitle className="h-[21px] pt-[2px]"><span className="underline underline-offset-2">T</span>ree View</DockTitle>
          <div className="h-[686px] shrink-0 border-2 border-t-[#7c7c7c] border-r-[#f4f4f4] border-b-[#f8f8f8] border-l-[#7c7c7c]"><Tree /></div>
          <div className="mt-[6px] h-[2px] shrink-0 border-t border-b border-t-[#a0a0a0] border-b-[#696969]" />
          <DockTitle className="h-[21px] border-t border-white pt-[2px]"><span className="tracking-[-0.5px]">Doc<span className="underline underline-offset-2">u</span>mentation</span></DockTitle>
          <div className="flex h-[26px] shrink-0 items-start border-t border-[#a0a0a0] pl-[14px]">
            <div className="pt-[1px]"><ClassIcon /></div>
            <div className={SMALL + ' ml-[24px] h-[18px] w-[199px] border-r border-b border-l border-r-[#a0a0a0] border-b-[#a0a0a0] border-l-white text-center leading-[19px] tracking-[-0.15px]'}>process order</div>
            <div className="mt-[1px] ml-[7px] h-[16px] w-[16px] border-2 border-t-[#7c7c7c] border-r-[#e3e3e3] border-b-[#e3e3e3] border-l-[#7c7c7c] bg-white" />
          </div>
          <div className="h-[223px] shrink-0 border-2 border-t-[#7c7c7c] border-r-[#f4f4f4] border-b-[#f8f8f8] border-l-[#7c7c7c] bg-white" />
        </div>

        {/* Diagram area */}
        <div className="ml-[5px] flex h-[987px] w-[1546px] flex-col border-r-2 border-b-2 border-l-2 border-[#7c7c7c]">
          <div className="flex h-[26px] shrink-0">
            <div className="w-[27px] border-t border-white">
              <svg viewBox="0 0 22 20" className="mt-[3px] ml-[4px] h-[20px] w-[22px]" fill="none">
                <path d="M3.500 2.500h14q1 0 1 1v11q0 1-1 1h-12q-1 0-1-1v-11z" fill="#f6f6f6" stroke="#b0b0b0" /><circle cx="5" cy="4" r="3.800" fill="#ffe98a" opacity=".7" /><circle cx="5" cy="4" r="2.200" fill="#f5c518" />
                <path d="M14 13h8l-4 4z" fill="#000" />
              </svg>
            </div>
            <div className="flex h-[26px] w-[258px] items-center border-t border-r-2 border-l border-t-white border-r-[#7c7c7c] border-l-white pl-[13px]">
              <svg viewBox="0 0 16 16" className="h-[20px] w-[20px]" fill="none"><DiagramShape alt /></svg>
              <span className={SMALL + ' ml-[5px] w-[185px] pt-[2px] tracking-[-0.08px] whitespace-nowrap'}>communication diagram for E...</span>
              <svg viewBox="0 0 14 14" className="h-[14px] w-[14px]"><rect x=".5" y=".5" width="13" height="13" rx="1.500" fill="#e26b4a" stroke="#c8502f" /><path d="M4 4l6 6M10 4l-6 6" stroke="#fff" strokeWidth="2.200" /></svg>
            </div>
          </div>
          <div className="h-[2px] shrink-0 bg-white" />
          <div className="ml-[2px] h-[957px] w-[1538px] border-t-2 border-b-2 border-l-2 border-t-[#7c7c7c] border-b-[#f4f4f4] border-l-[#7c7c7c]"><Diagram /></div>
        </div>
      </div>

      {/* Status bar */}
      <div className={UI + ' flex h-[35px] shrink-0 items-start pt-[2px]'}>
        <div className="flex h-[32px] w-[320px] shrink-0 items-center border border-t-[#a0a0a0] border-r-white border-b-white border-l-[#a0a0a0] pl-[1px] tracking-[-0.29px] whitespace-nowrap">Press Ctrl with left mouse click to delete a point</div>
        <div className="ml-[711px] flex h-[32px] w-[712px] shrink-0 items-center justify-end border border-t-[#a0a0a0] border-r-white border-b-white border-l-[#a0a0a0]">
          <span className="mr-[9px] tracking-[-0.7px]">65%</span>
          <div className="flex h-[30px] w-[83px] items-center border-t border-r-2 border-b-2 border-l border-t-white border-r-[#757575] border-b-[#757575] border-l-white pl-[6px]">
            <span className="w-[24px] tracking-[-0.3px]">Fit</span>
            <div className="h-[18px] w-[2px] border-r border-l border-r-white border-l-[#a0a0a0]" />
            <span className="ml-[7px] tracking-[-0.7px]">100%</span>
          </div>
        </div>
        <div className="ml-[3px] flex h-[32px] w-[34px] shrink-0 items-center justify-center border border-t-[#a0a0a0] border-r-white border-b-white border-l-[#a0a0a0]"><Magnifier /></div>
        <div className="relative ml-[2px] flex h-[32px] w-[104px] shrink-0 items-center border border-t-[#a0a0a0] border-r-white border-b-white border-l-[#a0a0a0] pl-[1px]">
          <div className="-mt-[1px] h-[2px] w-[98px] border-t border-b border-t-[#757575] border-b-[#b5b5b5]" />
          <div className="absolute top-0 left-[10px] h-[30px] w-[13px] border-t border-r-2 border-b-2 border-l border-t-white border-r-[#757575] border-b-[#757575] border-l-white bg-[#efefef]" />
        </div>
        <div className="ml-[2px] flex h-[32px] w-[32px] shrink-0 items-center border-t border-b border-l border-t-[#a0a0a0] border-b-white border-l-[#a0a0a0] pl-[7px]"><Magnifier plus /></div>
      </div>

      <Taskbar />

      {/* Floating assistant button */}
      <div className="absolute top-[661px] left-[1850px] flex h-[59px] w-[59px] items-center justify-center rounded-[11px] border-[3px] border-[#b4b6ba] bg-[#bcc0c7]">
        <svg viewBox="0 0 40 40" className="h-[42px] w-[42px]">
          <path d="M24 5q4 0 4 3.500v6L15 22h-5q-5-1-2.500-5z" fill="#f4f8fd" />
          <path d="M16 35q-4 0-4-3.500v-6L25 18h5q5 1 2.500 5z" fill="#f4f8fd" />
          <path d="M28 14.500V18h-5.500zM12 25.500V22h5.500z" fill="#a3c2ea" />
        </svg>
      </div>
    </div>
  );
}
